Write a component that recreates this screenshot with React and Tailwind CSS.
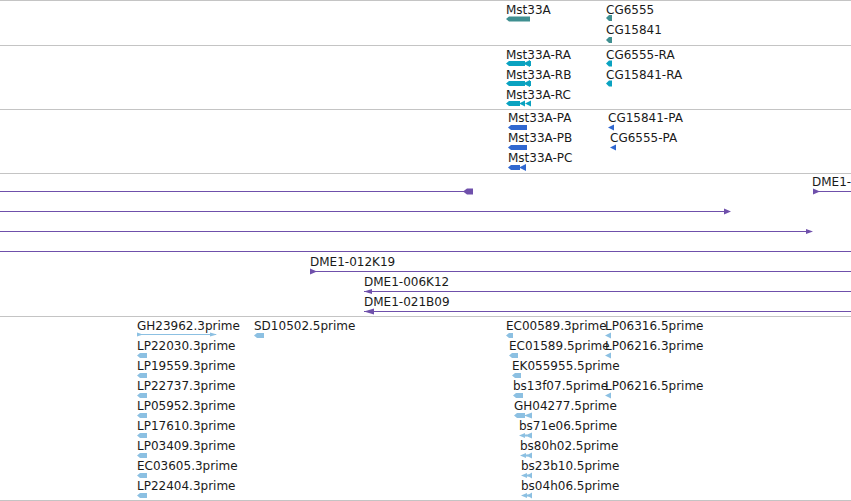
import React from 'react';

// colours per track type
const TEAL = '#3f8f90';
const CYAN = '#0aa2c0';
const BLUE = '#3068d0';
const PURPLE = '#6f50ab';
const EST = '#8cc0e2';

// glyph shape helpers (global page coords)
const arrowL = (x1, x2, cy, h = 5) =>
  `${x1},${cy} ${x1 + 3},${cy - h / 2} ${x2},${cy - h / 2} ${x2},${cy + h / 2} ${x1 + 3},${cy + h / 2}`;
const triL = (x1, x2, cy, h = 5) => `${x1},${cy} ${x2},${cy - h / 2} ${x2},${cy + h / 2}`;
const triR = (x1, x2, cy, h = 5) => `${x1},${cy - h / 2} ${x2},${cy} ${x1},${cy + h / 2}`;
// short hit: little point then a square body
const stub = (x1, cy) => `${x1},${cy} ${x1 + 3},${cy - 3} ${x1 + 6},${cy - 3} ${x1 + 6},${cy + 3} ${x1 + 3},${cy + 3}`;

function Track({ top, height, labels, children }) {
  return (
    <div className="relative border-b border-[#c4c4c4] overflow-hidden" style={{ height }}>
      <svg className="absolute inset-0" width="851" height={height}>
        <g transform={`translate(0, ${-top})`}>{children}</g>
      </svg>
      {labels.map(([text, x, y]) => (
        <div
          key={text + x + y}
          className="absolute whitespace-nowrap text-[12px] leading-[12px] text-[#1a1a1a]"
          style={{ left: x, top: y - top }}
        >
          {text}
        </div>
      ))}
    </div>
  );
}

function Gene() {
  const labels = [
    ['Mst33A', 506, 4],
    ['CG6555', 606, 4],
    ['CG15841', 606, 24],
  ];
  return (
    <Track top={1} height={45} labels={labels}>
      <polygon points={arrowL(506, 530, 19, 5)} fill={TEAL} />
      <polygon points={stub(606, 18)} fill={TEAL} />
      <polygon points={stub(606, 40)} fill={TEAL} />
    </Track>
  );
}

function Transcripts() {
  const labels = [
    ['Mst33A-RA', 506, 48.5],
    ['Mst33A-RB', 506, 68.5],
    ['Mst33A-RC', 506, 88.5],
    ['CG6555-RA', 606, 48.5],
    ['CG15841-RA', 606, 68.5],
  ];
  return (
    <Track top={46} height={64} labels={labels}>
      {[63.5, 83.5].map((cy) => (
        <g key={cy} fill={CYAN}>
          <polygon points={arrowL(506, 525, cy, 5)} />
          <polygon points={triL(523, 530, cy, 7)} />
          <rect x="529" y={cy - 2.5} width="2" height="5" />
        </g>
      ))}
      <g fill={CYAN}>
        <polygon points={arrowL(506, 520, 103.5, 5)} />
        <polygon points={triL(519, 525, 103.5, 6)} />
        <polygon points={triL(525, 531, 103.5, 6)} />
      </g>
      <polygon points={stub(606, 63.5)} fill={CYAN} />
      <polygon points={stub(606, 83.5)} fill={CYAN} />
    </Track>
  );
}

function CDS() {
  const labels = [
    ['Mst33A-PA', 508, 112],
    ['Mst33A-PB', 508, 132],
    ['Mst33A-PC', 508, 152],
    ['CG15841-PA', 608, 112],
    ['CG6555-PA', 610, 132],
  ];
  return (
    <Track top={110} height={64} labels={labels}>
      <polygon points={arrowL(508, 527, 127.5, 5)} fill={BLUE} />
      <polygon points={arrowL(508, 527, 147.5, 5)} fill={BLUE} />
      <g fill={BLUE}>
        <polygon points={arrowL(508, 520, 167.5, 5)} />
        <polygon points={triL(519, 526, 167.5, 7)} />
      </g>
      <polygon points={triL(608, 614, 127.5, 6)} fill={BLUE} />
      <polygon points={triL(610, 616, 147.5, 6)} fill={BLUE} />
    </Track>
  );
}

function Clones() {
  const labels = [
    ['DME1-', 812, 176],
    ['DME1-012K19', 310, 256],
    ['DME1-006K12', 364, 276],
    ['DME1-021B09', 364, 296],
  ];
  const lines = [
    [0, 466, 191],
    [813, 851, 191],
    [0, 725, 211],
    [0, 807, 231],
    [0, 851, 251],
    [310, 851, 271],
    [364, 851, 291],
    [364, 851, 311],
  ];
  return (
    <Track top={174} height={143} labels={labels}>
      {lines.map(([x1, x2, y]) => (
        <rect key={x1 + '-' + y} x={x1} y={y} width={x2 - x1} height="1" fill={PURPLE} />
      ))}
      <g fill={PURPLE}>
        <polygon points={`463,191.5 467,188.5 473,188.5 473,194.5 467,194.5`} />
        <polygon points={triR(813, 820, 191.5, 6)} />
        <polygon points={triR(724, 731, 211.5, 6)} />
        <polygon points={triR(806, 813, 231.5, 5)} />
        <polygon points={triR(310, 317, 271.5, 6)} />
        <polygon points={triL(364, 372, 291.5, 5)} />
        <polygon points={triL(364, 374, 311.5, 6)} />
      </g>
    </Track>
  );
}

function ESTs() {
  const left = ['GH23962.3prime', 'LP22030.3prime', 'LP19559.3prime', 'LP22737.3prime', 'LP05952.3prime', 'LP17610.3prime', 'LP03409.3prime', 'EC03605.3prime', 'LP22404.3prime'];
  const right = [
    ['EC00589.3prime', 506],
    ['EC01589.5prime', 509],
    ['EK055955.5prime', 512],
    ['bs13f07.5prime', 513],
    ['GH04277.5prime', 514],
    ['bs71e06.5prime', 519],
    ['bs80h02.5prime', 520],
    ['bs23b10.5prime', 521],
    ['bs04h06.5prime', 521],
  ];
  const labels = [
    ...left.map((t, i) => [t, 137, 320 + i * 20]),
    ['SD10502.5prime', 254, 320],
    ...right.map(([t, x], i) => [t, x, 320 + i * 20]),
    ['LP06316.5prime', 605, 320],
    ['LP06216.3prime', 605, 340],
    ['LP06216.5prime', 605, 380],
  ];
  const rowY = (i) => 335.5 + i * 20;
  const ends = [513, 518, 521, 523];
  return (
    <Track top={317} height={184} labels={labels}>
      <g fill={EST}>
        {/* GH23962: spliced hit with thin connector */}
        <rect x="137" y="334" width="79" height="1" />
        <polygon points={triR(137, 143, 334.5, 4)} />
        <polygon points={triR(210, 217, 334.5, 4)} />
        {left.slice(1).map((t, i) => (
          <polygon key={t} points={arrowL(137, 147, rowY(i + 1), 5)} />
        ))}
        <polygon points={arrowL(254, 264, rowY(0), 5)} />
        {right.slice(0, 4).map(([t, x], i) => (
          <polygon key={t} points={arrowL(x, ends[i], rowY(i), 5)} />
        ))}
        <polygon points={arrowL(514, 525, rowY(4), 5)} />
        <polygon points={triL(524, 532, rowY(4), 6)} />
        {right.slice(5).map(([t, x], i) => (
          <g key={t}>
            <polygon points={triL(x, x + 6, rowY(i + 5), 5)} />
            <rect x={x + 5} y={rowY(i + 5) - 1} width="3" height="2" />
            <polygon points={triL(x + 6, 532, rowY(i + 5), 6)} />
          </g>
        ))}
        <polygon points={triL(605, 611, rowY(0), 6)} />
        <polygon points={triL(605, 611, rowY(1), 6)} />
        <polygon points={triL(605, 611, rowY(3), 6)} />
      </g>
    </Track>
  );
}

export default function App() {
  return (
    <div className="w-[851px] h-[501px] overflow-hidden bg-white border-t border-[#c4c4c4] font-['DejaVu_Sans',sans-serif]">
      <Gene />
      <Transcripts />
      <CDS />
      <Clones />
      <ESTs />
    </div>
  );
}
